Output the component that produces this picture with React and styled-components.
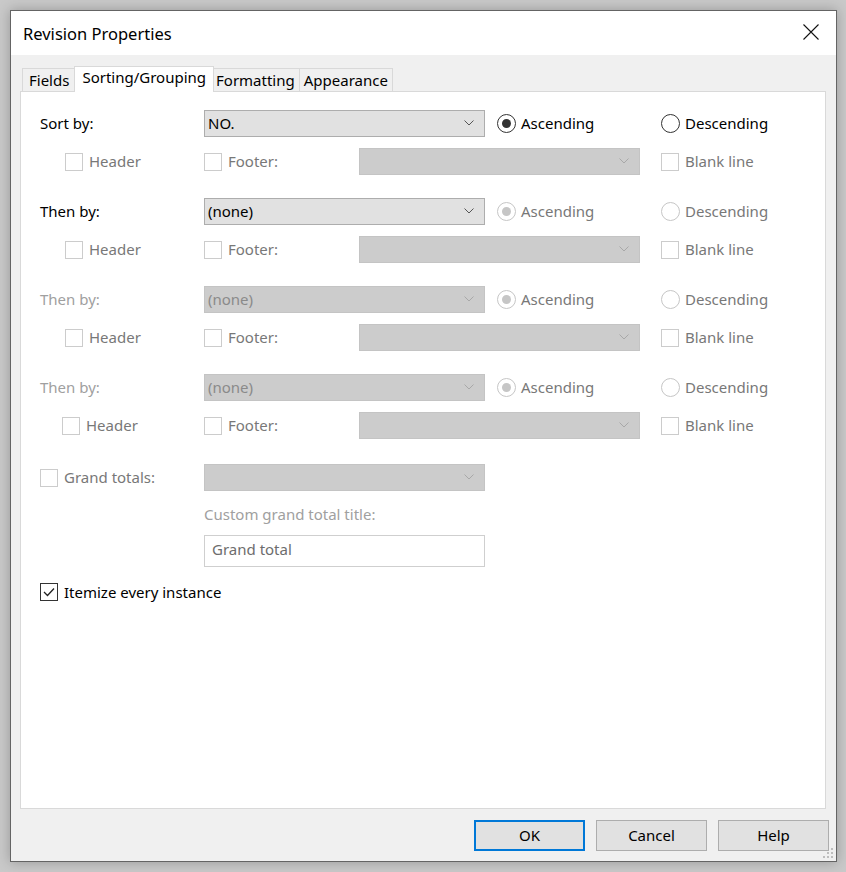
import styled, { createGlobalStyle } from "styled-components";

const Global = createGlobalStyle`
  html, body { margin: 0; padding: 0; }
  body {
    background: #c9c9c9;
    font-family: "Noto Sans", "Open Sans", sans-serif;
    width: 846px;
    height: 872px;
    overflow: hidden;
  }
`;

const Window = styled.div`
  margin: 10px;
  width: 825px;
  height: 850px;
  border: 1px solid #646464;
  background: #f0f0f0;
  box-shadow: 0 0 12px rgba(0,0,0,0.25);
  display: flex;
  flex-direction: column;
  position: relative;
`;

const TitleBar = styled.div`
  height: 44px;
  background: #fff;
  display: flex;
  align-items: center;
  justify-content: space-between;
  padding: 0 16px 0 12px;
  font-size: 16.5px;
  color: #000;
`;

const Close = styled.div`
  width: 18px;
  height: 18px;
  display: flex;
  margin-top: -2px;
`;

const Tabs = styled.div`
  display: flex;
  align-items: flex-end;
  margin: 11px 0 0 11px;
  height: 26px;
  position: relative;
  z-index: 1;
`;

const Tab = styled.div`
  height: ${p => (p.$active ? "26px" : "24px")};
  box-sizing: border-box;
  padding: 0 ${p => (p.$active ? "7px" : p.$first ? "6px" : "4px")};
  margin-left: ${p => (p.$active ? "-2px" : "0")};
  margin-right: ${p => (p.$active ? "-2px" : "0")};
  border: 1px solid #d9d9d9;
  border-bottom: ${p => (p.$active ? "none" : "1px solid #d9d9d9")};
  border-left-width: ${p => (p.$first || p.$active ? "1px" : "0")};
  background: ${p => (p.$active ? "#fff" : "#f0f0f0")};
  font-size: 15px;
  line-height: ${p => (p.$active ? "21px" : "22px")};
  color: #000;
  position: relative;
  z-index: ${p => (p.$active ? 2 : 1)};
`;

const Panel = styled.div`
  margin: -1px 10px 0 9px;
  height: 718px;
  box-sizing: border-box;
  background: #fff;
  border: 1px solid #d9d9d9;
  padding: 18px 0 0 19px;
  display: flex;
  flex-direction: column;
`;

const Group = styled.div`
  display: flex;
  flex-direction: column;
  gap: 11px;
  margin-bottom: 23px;
`;

const Row = styled.div`
  display: flex;
  align-items: center;
  height: ${p => p.$h || 27}px;
  margin-top: ${p => p.$mt || 0}px;
`;

const Cell = styled.div`
  width: ${p => p.$w}px;
  flex: none;
  display: flex;
  align-items: center;
  padding-left: ${p => p.$pl || 0}px;
  box-sizing: border-box;
`;

const Label = styled.span`
  font-size: 15px;
  color: ${p => p.$c || "#000"};
  white-space: nowrap;
  margin-top: -1px;
`;

const SelectBox = styled.div`
  width: ${p => p.$w}px;
  height: 27px;
  box-sizing: border-box;
  border: 1px solid ${p => (p.$off ? "#c4c4c4" : "#adadad")};
  background: ${p => (p.$off ? "#cccccc" : "#e1e1e1")};
  display: flex;
  align-items: center;
  justify-content: space-between;
  padding: 0 10px 1px 3px;
  font-size: 15px;
  color: ${p => (p.$off ? "#8a8a8a" : "#000")};
  flex: none;
`;

const TextBox = styled.div`
  width: 281px;
  height: 32px;
  box-sizing: border-box;
  border: 1px solid #cfcfcf;
  background: #fff;
  display: flex;
  align-items: center;
  padding: 0 7px 4px;
  font-size: 15px;
  color: #6d6d6d;
`;

const Box = styled.span`
  width: 18px;
  height: 18px;
  box-sizing: border-box;
  border: 1px solid ${p => (p.$on ? "#333" : "#cccccc")};
  background: #fff;
  margin-right: 6px;
  flex: none;
  display: flex;
  align-items: center;
  justify-content: center;
`;

const Radio = styled.span`
  width: 19px;
  height: 19px;
  box-sizing: border-box;
  border-radius: 50%;
  border: 1px solid ${p => (p.$off ? "#c6c6c6" : "#333")};
  margin-right: 5px;
  flex: none;
  display: flex;
  align-items: center;
  justify-content: center;
  &::after {
    content: "";
    display: ${p => (p.$checked ? "block" : "none")};
    width: 9px;
    height: 9px;
    border-radius: 50%;
    background: ${p => (p.$off ? "#c6c6c6" : "#333")};
  }
`;

const Footer = styled.div`
  display: flex;
  justify-content: flex-end;
  gap: 11px;
  padding: 11px 7px 0 0;
`;

const Button = styled.div`
  width: 111px;
  height: 31px;
  box-sizing: border-box;
  border: ${p => (p.$default ? "2px solid #0078d7" : "1px solid #adadad")};
  background: #e1e1e1;
  display: flex;
  align-items: center;
  justify-content: center;
  padding-bottom: 1px;
  font-size: 15px;
  color: #000;
`;

const Grip = styled.svg`
  position: absolute;
  right: 1px;
  bottom: 1px;
`;

const Arrow = ({ off }) => (
  <svg width="10" height="6" viewBox="0 0 10 6">
    <path d="M0.5 0.5 L5 5 L9.5 0.5" fill="none" stroke={off ? "#a8a8a8" : "#555"} strokeWidth="1" />
  </svg>
);

const Check = ({ on, label, color }) => (
  <>
    <Box $on={on}>
      {on && (
        <svg width="12" height="10" viewBox="0 0 12 10">
          <path d="M1 5 L4.5 8.5 L11 1.5" fill="none" stroke="#222" strokeWidth="1.3" />
        </svg>
      )}
    </Box>
    <Label $c={color}>{label}</Label>
  </>
);

const GRAY = "#787878";
const LIGHT = "#a0a0a0";

function SortGroup({ title, value, titleOff, selOff, radiosOff, headerPad = 25 }) {
  return (
    <Group>
      <Row>
        <Cell $w={164}><Label $c={titleOff ? LIGHT : "#000"}>{title}</Label></Cell>
        <SelectBox $w={281} $off={selOff}>
          <span>{value}</span>
          <Arrow off={selOff} />
        </SelectBox>
        <Cell $w={176} $pl={12}>
          <Radio $checked $off={radiosOff} />
          <Label $c={radiosOff ? GRAY : "#000"}>Ascending</Label>
        </Cell>
        <Cell $w={120}>
          <Radio $off={radiosOff} />
          <Label $c={radiosOff ? GRAY : "#000"}>Descending</Label>
        </Cell>
      </Row>
      <Row>
        <Cell $w={164} $pl={headerPad}><Check label="Header" color={GRAY} /></Cell>
        <Cell $w={155}><Check label="Footer:" color={GRAY} /></Cell>
        <SelectBox $w={281} $off><span /><Arrow off /></SelectBox>
        <Cell $w={140} $pl={21}><Check label="Blank line" color={GRAY} /></Cell>
      </Row>
    </Group>
  );
}

export default function App() {
  return (
    <>
      <Global />
      <Window>
        <TitleBar>
          <span>Revision Properties</span>
          <Close>
            <svg width="18" height="18" viewBox="0 0 18 18">
              <path d="M1.5 1.5 L16.5 16.5 M16.5 1.5 L1.5 16.5" stroke="#111" strokeWidth="1.1" />
            </svg>
          </Close>
        </TitleBar>
        <Tabs>
          <Tab $first>Fields</Tab>
          <Tab $active>Sorting/Grouping</Tab>
          <Tab>Formatting</Tab>
          <Tab>Appearance</Tab>
        </Tabs>
        <Panel>
          <SortGroup title="Sort by:" value="NO." />
          <SortGroup title="Then by:" value="(none)" radiosOff />
          <SortGroup title="Then by:" value="(none)" titleOff selOff radiosOff />
          <SortGroup title="Then by:" value="(none)" titleOff selOff radiosOff headerPad={22} />
          <Row $mt={2}>
            <Cell $w={164}><Check label="Grand totals:" color={GRAY} /></Cell>
            <SelectBox $w={281} $off><span /><Arrow off /></SelectBox>
          </Row>
          <Row $h={22} $mt={12}>
            <Cell $w={164} />
            <Label $c={LIGHT}>Custom grand total title:</Label>
          </Row>
          <Row $h={32} $mt={10}>
            <Cell $w={164} />
            <TextBox>Grand total</TextBox>
          </Row>
          <Row $h={22} $mt={14}>
            <Check on label="Itemize every instance" color="#000" />
          </Row>
        </Panel>
        <Footer>
          <Button $default>OK</Button>
          <Button>Cancel</Button>
          <Button>Help</Button>
        </Footer>
        <Grip width="12" height="12" viewBox="0 0 12 12">
          <g fill="#bdbdbd">
            <rect x="8" y="0" width="2" height="2" />
            <rect x="4" y="4" width="2" height="2" />
            <rect x="8" y="4" width="2" height="2" />
            <rect x="0" y="8" width="2" height="2" />
            <rect x="4" y="8" width="2" height="2" />
            <rect x="8" y="8" width="2" height="2" />
          </g>
        </Grip>
      </Window>
    </>
  );
}
